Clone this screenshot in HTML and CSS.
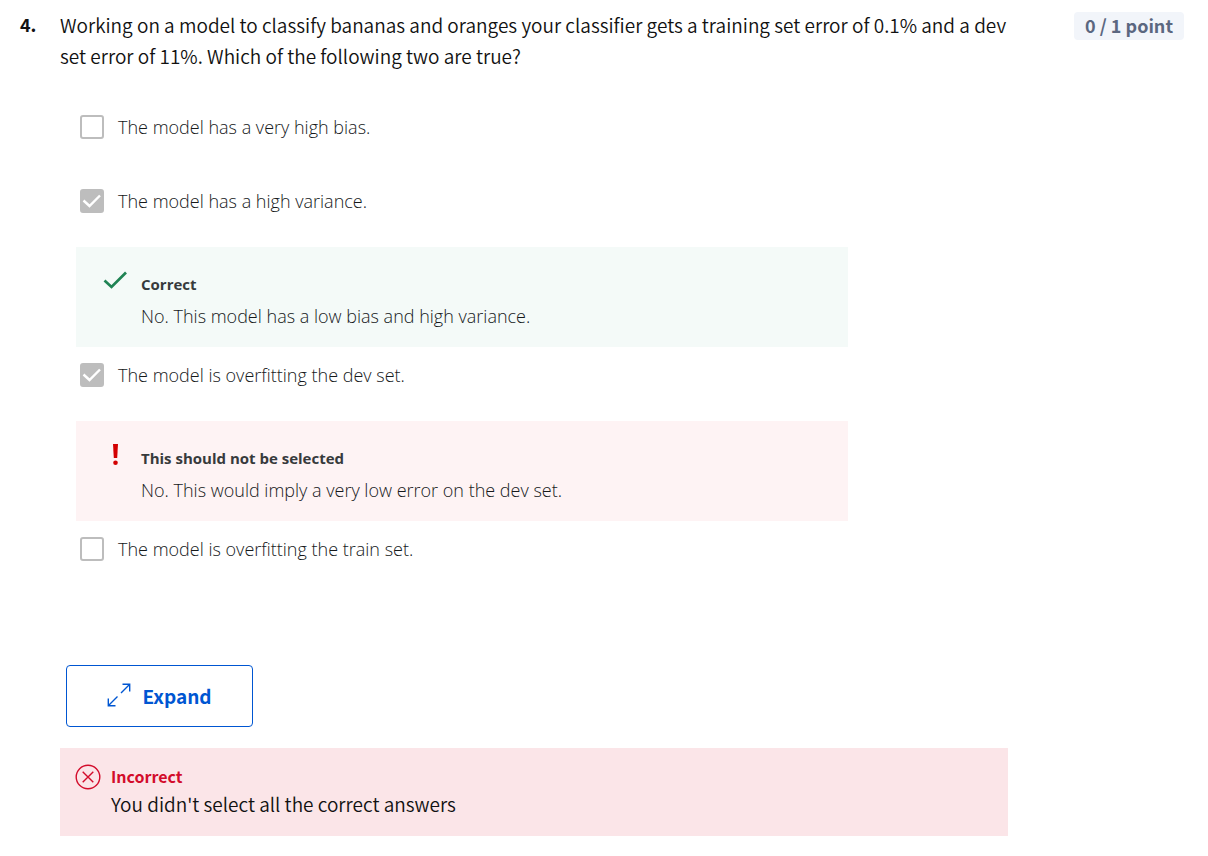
FILE: index.html
```html
<!DOCTYPE html>
<html lang="en">
<head>
<meta charset="utf-8">
<title>Quiz question</title>
<link rel="stylesheet" href="styles.css">
</head>
<body>
<main class="question">
  <div class="number">4.</div>
  <div class="content">
    <p class="prompt">Working on a model to classify bananas and oranges your classifier gets a training set error of 0.1% and a dev set error of 11%. Which of the following two are true?</p>
    <div class="options">
      <label class="option"><input class="box" type="checkbox"><span>The model has a very high bias.</span></label>
      <label class="option"><input class="box" type="checkbox" checked><span>The model has a high variance.</span></label>
      <div class="feedback correct">
        <svg class="mark" width="26" height="26" viewBox="0 0 26 26" aria-hidden="true"><path d="M2.500 12.500L9.500 19L24 4.500" fill="none" stroke="#1f8354" stroke-width="2.700"/></svg>
        <div><h2 class="feedback-title">Correct</h2><p class="feedback-text">No. This model has a low bias and high variance.</p></div>
      </div>
      <label class="option"><input class="box" type="checkbox" checked><span>The model is overfitting the dev set.</span></label>
      <div class="feedback wrong">
        <svg class="mark" width="26" height="26" viewBox="0 0 26 26" aria-hidden="true"><path d="M11 2h5l-.8 14h-3.400z" fill="#d30001"/><circle cx="13.500" cy="20.700" r="2.300" fill="#d30001"/></svg>
        <div><h2 class="feedback-title">This should not be selected</h2><p class="feedback-text">No. This would imply a very low error on the dev set.</p></div>
      </div>
      <label class="option"><input class="box" type="checkbox"><span>The model is overfitting the train set.</span></label>
    </div>
    <button class="expand" type="button">
      <svg width="24" height="24" viewBox="0 0 24 24" fill="none" stroke="#0056d2" stroke-width="1.400" aria-hidden="true"><path d="M14 10L22.500 1.500M15.500 1.300H22.700V8.500M10.500 13.500L1.500 22.500M1.300 15.500V22.700H8.500"/></svg>
      <span>Expand</span>
    </button>
    <section class="result">
      <svg width="26" height="26" viewBox="0 0 26 26" fill="none" stroke="#d30c2b" stroke-width="1.400" aria-hidden="true"><circle cx="13" cy="13" r="11.800"/><path d="M7.700 7.700L18.300 18.300M18.300 7.700L7.700 18.300"/></svg>
      <div><h2 class="result-title">Incorrect</h2><p class="result-text">You didn't select all the correct answers</p></div>
    </section>
  </div>
  <div class="points">0 / 1 point</div>
</main>
</body>
</html>
```
FILE: styles.css
```css
* {
  box-sizing: border-box;
}

body {
  margin: 0;
  background: #fff;
  color: #111;
  font-family: "Noto Sans CJK SC", sans-serif;
  font-size: 19px;
}

h2,
p {
  margin: 0;
}

.question {
  display: grid;
  grid-template-columns: 40px minmax(0, 1fr) 176px;
  align-items: start;
  padding: 9px 24px 20px 20px;
  line-height: 31px;
}

.number {
  font-size: 18px;
  font-weight: 700;
}

.prompt {
  font-weight: 350;
}

.options {
  max-width: 788px;
  padding: 28px 0 0 16px;
  color: #16191b;
  font-family: "Open Sans", sans-serif;
  font-size: 18px;
  font-weight: 300;
}

.option {
  display: flex;
  align-items: center;
  gap: 14px;
  height: 74px;
  padding: 0 4px 18px;
}

.box {
  flex: none;
  appearance: none;
  width: 24px;
  height: 24px;
  margin: 0;
  border: 2px solid #bdbdbd;
  border-radius: 3px;
  background: #fff;
}

.box:checked {
  background: #bdbdbd url('data:image/svg+xml,<svg xmlns="http://www.w3.org/2000/svg" viewBox="0 0 20 20"><path d="M1.500 9.500L7.500 15L18 4.500" fill="none" stroke="white" stroke-width="2.400"/></svg>') center / 20px no-repeat;
}

.feedback {
  display: flex;
  gap: 13px;
  padding: 21px 26px 15px;
}

.mark {
  flex: none;
}

.correct {
  background: #f4faf8;
}

.wrong {
  background: #fef3f4;
}

.feedback-title {
  color: #373a3c;
  font-size: 15px;
  font-weight: 700;
  line-height: 32px;
}

.feedback-text {
  line-height: 32px;
}

.expand {
  display: flex;
  align-items: center;
  justify-content: center;
  gap: 11px;
  min-width: 187px;
  height: 62px;
  margin: 70px 0 21px 6px;
  padding-bottom: 3px;
  border: 1px solid #0056d2;
  border-radius: 4px;
  background: #fff;
  color: #0056d2;
  font: inherit;
  font-weight: 700;
}

.result {
  display: flex;
  gap: 10px;
  padding: 15px 15px 17px;
  background: #fbe5e8;
}

.result svg {
  margin-top: 1px;
}

.result-title {
  color: #d30c2b;
  font-size: 16px;
  font-weight: 700;
  line-height: 26px;
}

.result-text {
  font-weight: 350;
  line-height: 30px;
}

.points {
  justify-self: end;
  margin-top: 3px;
  padding: 0 11px 1px;
  border-radius: 4px;
  background: #f2f5fa;
  color: #5b6780;
  font-size: 18px;
  font-weight: 700;
  line-height: 27px;
}
```
